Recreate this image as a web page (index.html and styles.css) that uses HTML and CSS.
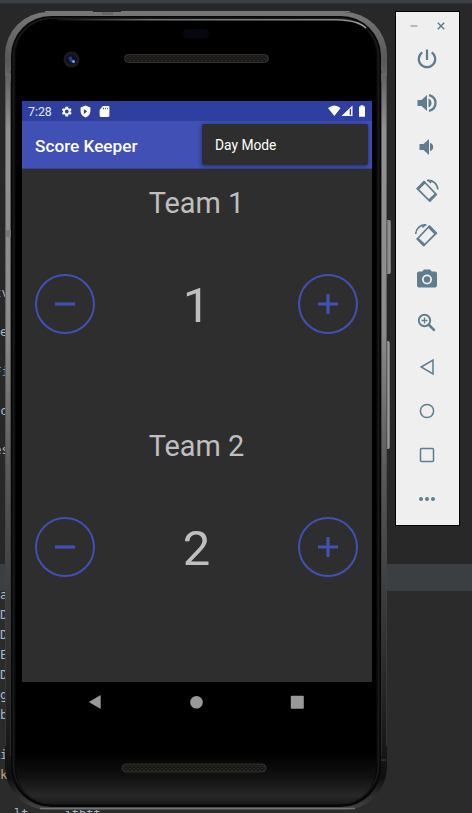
FILE: index.html
```html
<!DOCTYPE html>
<html lang="en">
<head>
<meta charset="utf-8">
<title>Score Keeper</title>
<link rel="stylesheet" href="styles.css">
</head>
<body>
<main class="desktop">
  <div class="tabs-edge"></div>
  <div class="code code-top"><span class="cut">tv</span><span>e</span><span class="cut blue">Fi</span><span>c</span><span class="cut">es</span></div>
  <div class="panel-head"></div>
  <div class="code code-bottom"><span>a</span><span>D</span><span>D</span><span>E</span><span>D</span><span>g</span><span>b</span><span></span><span>i</span><span class="gold">k</span></div>
  <div class="code-last">lt&nbsp; &nbsp; &nbsp;itbtt</div>

  <section class="phone">
    <svg class="shell" viewBox="0 0 392 802" width="392" height="802" aria-hidden="true">
      <defs>
        <linearGradient id="rail" x1="0" y1="0" x2="0" y2="1">
          <stop offset="0" stop-color="#777"/><stop offset=".06" stop-color="#585858"/><stop offset=".15" stop-color="#929292"/>
          <stop offset=".4" stop-color="#8b8b8b"/><stop offset=".57" stop-color="#5a5a5a"/><stop offset=".8" stop-color="#303030"/><stop offset=".96" stop-color="#101010"/><stop offset="1" stop-color="#444"/>
        </linearGradient>
        <linearGradient id="glass" x1="0" y1="0" x2="0" y2="1">
          <stop offset="0" stop-color="#000"/><stop offset=".935" stop-color="#000"/><stop offset=".967" stop-color="#121212"/><stop offset=".99" stop-color="#282828"/><stop offset="1" stop-color="#191919"/>
        </linearGradient>
        <linearGradient id="shine" x1="0" y1="0" x2="1" y2="0">
          <stop offset="0" stop-color="#111"/><stop offset=".3" stop-color="#6a7074"/><stop offset=".9" stop-color="#858a8c"/><stop offset="1" stop-color="#aaa"/>
        </linearGradient>
        <linearGradient id="key" x1="0" y1="0" x2="1" y2="0"><stop offset="0" stop-color="#444"/><stop offset=".7" stop-color="#999"/><stop offset="1" stop-color="#666"/></linearGradient>
        <pattern id="mesh" width="4" height="4" patternUnits="userSpaceOnUse"><rect width="4" height="4" fill="#1b1917"/><path d="M0 1h2v1h-2zM2 3h2v1h-2z" fill="#2b2825"/></pattern>
      </defs>
      <rect x="380" y="209" width="6" height="54" rx="2" fill="url(#key)"/>
      <rect x="380" y="330" width="5" height="108" rx="2" fill="url(#key)"/>
      <path d="M40 .5h48M116 .5h229" stroke="#777"/>
      <rect x="0" y="1" width="382" height="798" rx="43" fill="url(#rail)"/>
      <path d="M.5 65V735M381.500 65V735" stroke="#444" stroke-opacity=".6"/>
      <path d="M5.500 60V745M376.500 60V745" stroke="#333" stroke-opacity=".6"/>
      <path d="M376 749h5" stroke="#444"/>
      <rect x="1" y="62" width="5" height="8" fill="#666"/><rect x="376" y="62" width="5" height="8" fill="#666"/>
      <rect x="1" y="219" width="5" height="7" fill="#777"/><rect x="97" y="1" width="11" height="3" fill="#666"/>
      <rect x="6" y="5" width="370" height="791" rx="40" fill="#070707"/>
      <rect x="8.500" y="7.500" width="365" height="785" rx="38" fill="none" stroke="#181818" stroke-width="2"/>
      <rect x="11" y="8" width="360" height="785" rx="36" fill="url(#glass)"/>
      <path d="M52 8.700H332C345 9 355 11 361 17" fill="none" stroke="url(#shine)" stroke-width="1.600"/>
      <path d="M35 797.500H350" stroke="#737373" stroke-width="1.600"/>
      <rect x="178" y="18" width="26" height="9" rx="4.500" fill="#07080f"/>
      <circle cx="66.500" cy="48.500" r="8" fill="#1b1b1e"/><circle cx="66.500" cy="48.500" r="5" fill="#0b1024"/>
      <path d="M63 47l3-2 2 4-2 3z" fill="#253b8c"/><circle cx="68.500" cy="50.500" r="1.500" fill="#829ee9"/>
      <rect x="119.500" y="43.500" width="144" height="8" rx="4" fill="url(#mesh)" stroke="#353331"/>
      <rect x="117" y="753" width="144" height="8" rx="4" fill="url(#mesh)" stroke="#30302b"/>
    </svg>

    <div class="screen">
      <header class="status">
        <span class="clock">7:28</span>
        <svg class="gear" viewBox="0 0 24 24"><path fill-rule="evenodd" d="M19.400 13c.1-.7.1-1.300 0-2l2.100-1.600-2-3.500-2.500 1a8 8 0 0 0-1.700-1L15 3h-5l-.3 2.900a8 8 0 0 0-1.700 1l-2.500-1-2 3.500L5.600 11a8 8 0 0 0 0 2l-2.100 1.600 2 3.500 2.500-1a8 8 0 0 0 1.700 1L10 21h5l.3-2.900a8 8 0 0 0 1.700-1l2.500 1 2-3.500zM12.500 8.500a3.500 3.500 0 1 1 0 7 3.500 3.500 0 0 1 0-7z"/></svg>
        <svg class="shield" viewBox="0 0 24 24"><path fill-rule="evenodd" d="M12 1L3 4.500V12c0 5 4 9.500 9 11 5-1.500 9-6 9-11V4.500zM9 7.500v9l6-4.500z"/></svg>
        <svg class="card" viewBox="0 0 24 24"><path fill-rule="evenodd" d="M9 2L3 9v11q0 2 2 2h14q2 0 2-2V4q0-2-2-2zM9 5h2v3H9zM13 5h1.500v3H13zM16.500 5H18v3h-1.500z"/></svg>
        <span class="grow"></span>
        <svg class="signals" viewBox="0 0 38 12" width="38" height="12"><path d="M0 3Q6.300-2 12.600 3L6.300 11zM13.500 11L24.500 .5V11zM31 1.500h1.500V.3h3v1.200H37V11.700h-6z"/><path d="M21.700 4.500v5.500h1.400V3.500z" fill="#2e3f9f"/></svg>
      </header>
      <div class="appbar"><h1>Score Keeper</h1><button class="menu">Day Mode</button></div>
      <section class="team">
        <h2>Team 1</h2>
        <div class="score-row">
          <button class="round"><svg viewBox="0 0 20 20"><path d="M0 10h20"/></svg></button>
          <output>1</output>
          <button class="round"><svg viewBox="0 0 20 20"><path d="M0 10h20M10 0v20"/></svg></button>
        </div>
      </section>
      <section class="team">
        <h2>Team 2</h2>
        <div class="score-row">
          <button class="round"><svg viewBox="0 0 20 20"><path d="M0 10h20"/></svg></button>
          <output>2</output>
          <button class="round"><svg viewBox="0 0 20 20"><path d="M0 10h20M10 0v20"/></svg></button>
        </div>
      </section>
    </div>
    <nav class="nav">
      <svg viewBox="0 0 14 14"><path d="M.8 7L12.700 0v14z"/></svg>
      <svg viewBox="0 0 14 14"><circle cx="7.500" cy="7.300" r="6.300"/></svg>
      <svg viewBox="0 0 14 14"><rect x=".8" y=".8" width="13" height="13" rx="1"/></svg>
    </nav>
  </section>

  <aside class="tools">
    <div class="window-buttons">
      <svg viewBox="0 0 8 8"><path d="M.5 4h7" opacity=".6"/></svg>
      <svg viewBox="0 0 8 8"><path d="M.8.8l6.400 6.400M7.200.8L.8 7.200"/></svg>
    </div>
    <svg class="tool" viewBox="0 0 24 24"><path class="line" d="M12 2.500v10.500M7.300 5.300a8.200 8.200 0 1 0 9.400 0" stroke-width="2.200"/></svg>
    <svg class="tool" viewBox="0 0 24 24"><path d="M2.500 9v6h4l5.500 5V4L6.500 9zM13.500 7.500v9q3-1.300 3-4.500t-3-4.500z"/><path class="line" d="M14 4.200c4 1 6.500 4 6.500 7.800s-2.500 6.800-6.500 7.800" stroke-width="2.300"/></svg>
    <svg class="tool" viewBox="0 0 24 24"><path d="M4.500 9v6h4l5.500 5V4L8.500 9zM15 7.800v8.400q3.200-1.200 3.200-4.200T15 7.800z"/></svg>
    <svg class="tool" viewBox="0 0 24 24"><g id="rot"><path class="line" d="M9.500 3L21 15.200 14.500 21.800 2.300 9.700z" stroke-width="1.700"/><path d="M8.800 1.600l2.200 2.200-7.200 7.200-2.500-1.600zM20.400 14l2 1.500-7.200 7.500-2.500-2z"/><path class="line" d="M12 1.500c6-.8 10.500 3.500 10.800 9M12.500 1l3.700 3" stroke-width="1.600"/></g></svg>
    <svg class="tool" viewBox="0 0 24 24"><use href="#rot" transform="matrix(-1 0 0 1 23.500 .5)"/></svg>
    <svg class="tool" viewBox="0 0 24 24"><path fill-rule="evenodd" d="M9 2.500L7.200 4.500H4Q2 4.500 2 6.500v12q0 2 2 2h16q2 0 2-2v-12q0-2-2-2h-3.200L15 2.500zM12 7.500a5 5 0 1 1 0 10 5 5 0 0 1 0-10z"/><circle cx="12" cy="12.500" r="3.200"/></svg>
    <svg class="tool" viewBox="0 0 24 24"><circle class="line" cx="9.500" cy="9.500" r="5.700" stroke-width="1.900"/><path class="line" d="M13.500 13.500l6.200 6.200" stroke-width="2.500"/><path class="line" d="M9.500 6.500v6M6.500 9.500h6" stroke-width="1.300"/></svg>
    <svg class="tool" viewBox="0 0 24 24"><path class="line" d="M6.200 12L18 5v14z" stroke-width="1.500"/></svg>
    <svg class="tool" viewBox="0 0 24 24"><circle class="line" cx="12" cy="12" r="6.600" stroke-width="1.500"/></svg>
    <svg class="tool" viewBox="0 0 24 24"><rect class="line" x="5.500" y="5.500" width="13" height="13" rx="1" stroke-width="1.500"/></svg>
    <svg class="tool" viewBox="0 0 24 24"><circle cx="6" cy="12" r="2"/><circle cx="12" cy="12" r="2"/><circle cx="18" cy="12" r="2"/></svg>
  </aside>
</main>
</body>
</html>
```
FILE: styles.css
```css
* { box-sizing: border-box; }
body { margin: 0; font-family: Roboto, "Noto Sans", sans-serif; }
button { margin: 0; padding: 0; font: inherit; }
h1, h2 { margin: 0; font-weight: 400; }
svg { display: block; }

.desktop { position: relative; width: 472px; height: 813px; overflow: hidden; background: linear-gradient(#282828 590px, #2b2b2b 590px); }
.tabs-edge { height: 4px; background: #3c3f41; border-bottom: 1px solid #303234; }
.code { display: flex; flex-direction: column; font: 12.500px "DejaVu Sans Mono", monospace; color: #a9b7c6; }
.code-top { height: 560px; padding-top: 269px; }
.code-top span { height: 39.300px; line-height: 39.300px; }
.code .cut { margin-left: -6px; }
.code .blue { color: #779dc2; }
.code .gold { color: #c9a56e; }
.panel-head { height: 27px; background: #3c3f41; }
.code-bottom { height: 222px; margin-top: -6px; }
.code-bottom span { height: 20px; line-height: 20px; }
.code-last { position: absolute; left: 14px; top: 807px; font: 12px/14px "DejaVu Sans Mono", monospace; color: #a9b7c6; }

.phone { position: absolute; left: 5px; top: 11px; width: 392px; height: 802px; padding: 90px 0 0 17px; }
.shell { position: absolute; left: 0; top: 0; }
.screen { position: relative; width: 350px; height: 581px; background: #2e2e2e; }
.status { display: flex; align-items: center; height: 20px; padding: 0 6px 0 6px; background: #2e3f9f; color: #e8eaf6; fill: #fff; }
.clock { width: 32px; padding-top: 1px; font-size: 12.300px; }
.gear { width: 13px; height: 13px; margin-right: 6px; }
.shield { width: 13px; height: 13px; margin-right: 6px; }
.card { width: 13px; height: 13px; }
.grow { flex: 1; }
.signals { margin-top: -1px; }
.appbar { display: flex; align-items: center; justify-content: space-between; height: 48px; padding: 0 4px 0 13px; background: #4050b5; border-bottom: 1px solid #35429a; }
.appbar h1 { padding-top: 2px; font-size: 17.200px; font-weight: 500; color: #fff; }
.menu { width: 166px; height: 41px; padding: 1px 0 0 13px; border: 0; border-radius: 2px; background: #2e2e2e; color: #fff; font-size: 13.800px; text-align: left; box-shadow: 0 1px 4px rgba(0, 0, 0, .45); }
.team { height: 243px; padding: 16px 14px 0 13px; color: #bfbfbf; }
.team h2 { height: 36px; font-size: 28.900px; line-height: 36px; text-align: center; }
.score-row { display: flex; align-items: center; justify-content: space-between; height: 60px; margin-top: 53px; }
.score-row output { font-size: 49px; line-height: 60px; padding-top: 4px; }
.round { display: grid; place-items: center; width: 60px; height: 60px; border: 2px solid #4050b5; border-radius: 50%; background: transparent; }
.round svg { width: 20px; height: 20px; fill: none; stroke: #4050b5; stroke-width: 3.200; }
.nav { position: relative; display: flex; justify-content: space-between; width: 350px; padding: 13px 68px 0 66px; fill: #999; }
.nav svg { width: 14px; height: 14px; }

.tools { position: absolute; left: 395px; top: 11px; width: 65px; height: 515px; display: flex; flex-direction: column; align-items: center; gap: 20px; padding-right: 1px; border: 1px solid #000; background: #efefef; fill: #5f7d8c; }
.tool { flex: none; width: 24px; height: 24px; }
.line, .window-buttons svg { fill: none; stroke: #5f7d8c; }
.window-buttons { display: flex; gap: 19px; height: 15px; padding: 10px 0 0 1px; }
.window-buttons svg { width: 8px; height: 8px; stroke-width: 1.500; }
```
